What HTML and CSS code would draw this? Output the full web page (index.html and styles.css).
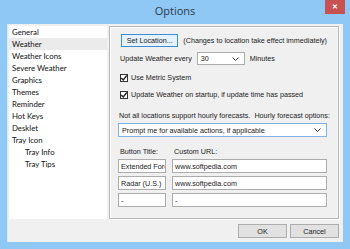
FILE: index.html
```html
<!DOCTYPE html>
<html>
<head>
<meta charset="utf-8">
<link rel="stylesheet" href="styles.css">
</head>
<body>
<div class="window">
  <div class="titlebar">
    <span class="title">Options</span>
    <span class="close">✕</span>
  </div>
  <div class="client">
    <div class="main">
      <ul class="nav">
        <li>General</li>
        <li class="sel">Weather</li>
        <li>Weather Icons</li>
        <li>Severe Weather</li>
        <li>Graphics</li>
        <li>Themes</li>
        <li>Reminder</li>
        <li>Hot Keys</li>
        <li>Desklet</li>
        <li>Tray Icon</li>
        <li class="sub">Tray Info</li>
        <li class="sub">Tray Tips</li>
      </ul>
      <div class="panel">
        <div class="row r1">
          <span class="btn setloc">Set Location...</span>
          <span class="note">(Changes to location take effect immediately)</span>
        </div>
        <div class="row r2">
          <span>Update Weather every</span>
          <span class="combo small"><span>30</span><svg class="chev" viewBox="0 0 7 4" width="7" height="4"><path d="M0.5 0.5 L3.5 3.5 L6.5 0.5" fill="none" stroke="#333" stroke-width="1"/></svg></span>
          <span>Minutes</span>
        </div>
        <div class="row r3">
          <span class="cb"><svg viewBox="0 0 8 8" width="8" height="8"><path d="M1.2 4 L3.2 6 L6.8 1.5" fill="none" stroke="#222" stroke-width="1.3"/></svg></span>
          <span>Use Metric System</span>
        </div>
        <div class="row r4">
          <span class="cb"><svg viewBox="0 0 8 8" width="8" height="8"><path d="M1.2 4 L3.2 6 L6.8 1.5" fill="none" stroke="#222" stroke-width="1.3"/></svg></span>
          <span>Update Weather on startup, if update time has passed</span>
        </div>
        <div class="row r5">
          <span>Not all locations support hourly forecasts.&nbsp; Hourly forecast options:</span>
        </div>
        <div class="row r6">
          <span class="combo wide"><span>Prompt me for available actions, if applicable</span><svg class="chev" viewBox="0 0 7 4" width="7" height="4"><path d="M0.5 0.5 L3.5 3.5 L6.5 0.5" fill="none" stroke="#333" stroke-width="1"/></svg></span>
        </div>
        <div class="grid">
          <span class="lbl">Button Title:</span>
          <span class="lbl">Custom URL:</span>
          <span class="input">Extended Forecast</span>
          <span class="input">www.softpedia.com</span>
          <span class="input">Radar (U.S.)</span>
          <span class="input">www.softpedia.com</span>
          <span class="input">-</span>
          <span class="input">-</span>
        </div>
      </div>
    </div>
    <div class="buttons">
      <span class="btn dlg">OK</span>
      <span class="btn dlg">Cancel</span>
    </div>
  </div>
</div>
</body>
</html>
```
FILE: styles.css
```css
html, body {
  margin: 0;
  padding: 0;
}
body {
  width: 350px;
  height: 249px;
  overflow: hidden;
  font-family: "Liberation Sans", Arial, sans-serif;
  font-size: 7.2px;
  color: #1a1a1a;
}
.window {
  width: 350px;
  height: 249px;
  background: #8fc7f5;
  display: flex;
  flex-direction: column;
  box-sizing: border-box;
  padding: 0 7px 7px 7px;
}
.titlebar {
  height: 24px;
  flex-shrink: 0;
  position: relative;
  display: flex;
  justify-content: center;
  align-items: center;
}
.title {
  font-family: "Open Sans", "Noto Sans", sans-serif;
  font-size: 11px;
  color: #2b3a4a;
  margin-top: -4px;
}
.close {
  position: absolute;
  right: -2px;
  top: 0;
  width: 20px;
  height: 14px;
  background: #c85151;
  color: #fff;
  font-size: 7px;
  display: flex;
  align-items: center;
  justify-content: center;
  font-weight: bold;
}
.client {
  flex: 1;
  background: #f0f0f0;
  border-left: 1px solid #d7ebfb;
  display: flex;
  flex-direction: column;
  padding: 2px 4px 0 1px;
}
.main {
  display: flex;
  gap: 2px;
  height: 193px;
}
.nav {
  list-style: none;
  margin: 0;
  padding: 0;
  width: 98px;
  flex-shrink: 0;
  background: #fff;
  font-family: "Lato", "Open Sans", sans-serif;
  font-size: 7.8px;
  color: #111;
  white-space: nowrap;
}
.nav li {
  height: 12px;
  line-height: 12px;
  padding-left: 3px;
}
.nav li.sel {
  background: #ebebeb;
}
.nav li.sub {
  padding-left: 16px;
}
.panel {
  flex: 1;
  min-width: 0;
  border: 1px solid #b9b9b9;
  box-shadow: inset 1px 1px 0 #fff, 1px 1px 0 #fff;
  padding: 7px 11px 0 8px;
  display: flex;
  flex-direction: column;
}
.row {
  display: flex;
  align-items: center;
  white-space: nowrap;
}
.btn {
  display: inline-flex;
  align-items: center;
  justify-content: center;
  box-sizing: border-box;
  border: 1px solid #adadad;
  background: #e1e1e1;
}
.setloc {
  width: 58px;
  height: 13px;
  margin-left: 3px;
  background: #e5f1fb;
  border-color: #3c8fd6;
}
.note {
  margin-left: 5px;
}
.r2 {
  margin-top: 5px;
  padding-left: 2px;
}
.combo {
  box-sizing: border-box;
  height: 13px;
  background: #fff;
  border: 1px solid #acacac;
  display: inline-flex;
  align-items: center;
  justify-content: space-between;
  padding: 0 5px 0 3px;
}
.combo.small {
  width: 48px;
  margin: 0 5px 0 5px;
}
.combo.wide {
  width: 209px;
  height: 14px;
  border-color: #7eb4ea;
}
.r3 {
  margin-top: 8px;
  padding-left: 2px;
}
.r4 {
  margin-top: 8px;
  padding-left: 2px;
}
.cb {
  box-sizing: border-box;
  width: 8px;
  height: 8px;
  border: 1px solid #333;
  background: #fff;
  display: inline-flex;
  margin-right: 3px;
}
.cb svg {
  margin: -1px;
}
.r5 {
  margin-top: 12px;
  padding-left: 1px;
}
.r6 {
  margin-top: 3px;
}
.grid {
  margin-top: 10px;
  display: grid;
  grid-template-columns: 48px 1fr;
  column-gap: 6px;
  row-gap: 3px;
}
.lbl {
  padding-left: 2px;
  margin-bottom: 0;
}
.input {
  box-sizing: border-box;
  height: 14px;
  border: 1px solid #acacac;
  background: #fff;
  padding: 0 2px;
  display: flex;
  align-items: center;
  overflow: hidden;
  white-space: nowrap;
}
.buttons {
  display: flex;
  justify-content: flex-end;
  gap: 3px;
  margin-top: 5px;
}
.dlg {
  width: 49px;
  height: 14px;
}
```
